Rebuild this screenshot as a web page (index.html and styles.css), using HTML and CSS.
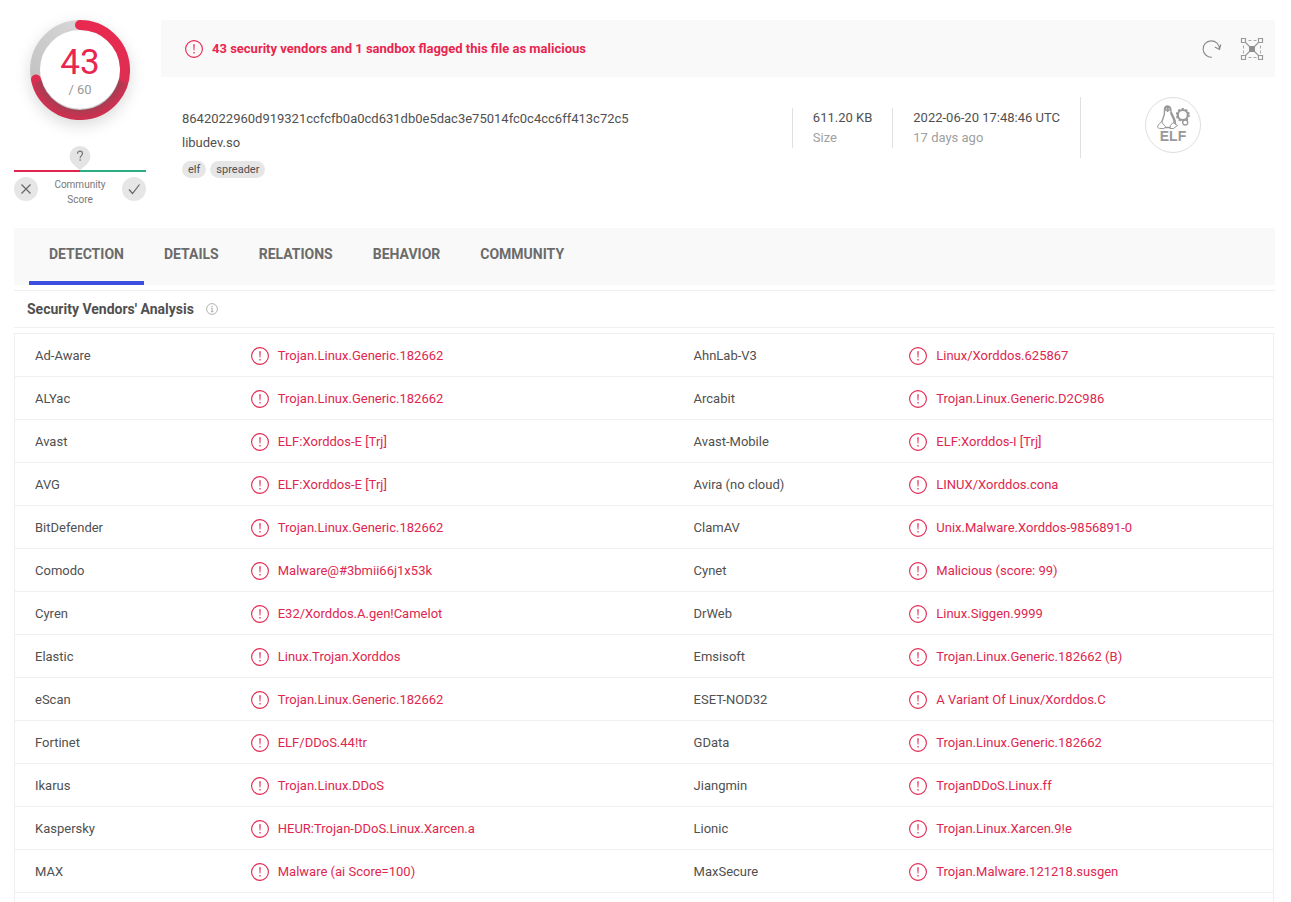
FILE: index.html
```
<!DOCTYPE html>
<html lang="en">
<head>
  <meta charset="UTF-8">
  <meta name="viewport" content="width=device-width, initial-scale=1.0">
  <title>libudev.so - File report</title>
  <link rel="stylesheet" href="styles.css">
</head>
<body>
  <svg class="sprite" aria-hidden="true">
    <symbol id="alert" viewBox="0 0 18 18">
      <circle cx="9" cy="9" r="8.4" fill="none" stroke="currentColor" stroke-width="1.1"/>
      <path d="M8.3 4.2h1.4l-.3 6.4h-.8zM8.4 12h1.2v1.4H8.4z" fill="currentColor"/>
    </symbol>
  </svg>

  <header class="report-header">
    <aside class="score">
      <div class="dial">
        <svg class="dial-ring" viewBox="0 0 100 100" aria-hidden="true">
          <defs>
            <linearGradient id="ringRed" x1="0" y1="0" x2="0" y2="1">
              <stop offset="0" stop-color="#e92a50"/>
              <stop offset="0.5" stop-color="#e02d52"/>
              <stop offset="1" stop-color="#cc3150"/>
            </linearGradient>
            <linearGradient id="ringGrey" x1="1" y1="0" x2="0" y2="1">
              <stop offset="0" stop-color="#dedede"/>
              <stop offset="1" stop-color="#bdbdbd"/>
            </linearGradient>
            <radialGradient id="ringShade" cx="50" cy="44" r="54" gradientUnits="userSpaceOnUse">
              <stop offset="0.8" stop-color="#555" stop-opacity="0.4"/>
              <stop offset="1" stop-color="#555" stop-opacity="0"/>
            </radialGradient>
          </defs>
          <circle cx="50" cy="50" r="45" fill="#fff" stroke="url(#ringGrey)" stroke-width="10"/>
          <path d="M50 5A45 45 0 1 1 6 59.4" fill="none" stroke="url(#ringRed)" stroke-width="10" stroke-linecap="round"/>
          <path d="M93 62A45 45 0 0 1 7 62" fill="none" stroke="url(#ringShade)" stroke-width="10"/>
        </svg>
        <div class="dial-text">
          <span class="positives">43</span>
          <span class="total">/ 60</span>
        </div>
      </div>
      <div class="community">
        <svg class="marker" viewBox="0 0 22 24" aria-hidden="true">
          <path d="M11 0a10.5 10.5 0 0 1 10.5 10.5c0 6-6 10-10.5 13.5C6.5 20.5.5 16.5.5 10.5A10.5 10.5 0 0 1 11 0z" fill="#e4e4e4"/>
          <path d="M8.5 7.800c0-1.700 1-2.700 2.500-2.700s2.500 1 2.500 2.500c0 2-2.400 2.200-2.400 4.600M11.100 13.300v1.400" fill="none" stroke="#777" stroke-width="1.2"/>
        </svg>
        <div class="community-bar"></div>
        <div class="votes">
          <button class="vote" type="button" aria-label="Vote malicious">
            <svg viewBox="0 0 24 24"><path d="M7.5 7.5l9 9M16.5 7.5l-9 9"/></svg>
          </button>
          <span class="community-label">Community Score</span>
          <button class="vote" type="button" aria-label="Vote harmless">
            <svg viewBox="0 0 24 24"><path d="M7 12.5l3.500 4L17.500 7.500"/></svg>
          </button>
        </div>
      </div>
    </aside>

    <section class="summary">
      <div class="banner">
        <svg class="icon"><use href="#alert"/></svg>
        <strong class="verdict">43 security vendors and 1 sandbox flagged this file as malicious</strong>
        <div class="tools">
          <button class="tool" type="button" aria-label="Reanalyze">
            <svg viewBox="0 0 24 24" fill="none" stroke="#8a8a8a" stroke-width="1.1">
              <path d="M12 20.200A8.200 8.200 0 1 1 19.500 12M14.800 10l4.700 2.500L20.800 7.500"/>
            </svg>
          </button>
          <button class="tool" type="button" aria-label="Open in graph">
            <svg viewBox="0 0 24 24" fill="none" stroke="#999">
              <path d="M3.500 3.500l17 17M20.500 3.500l-17 17" stroke-width="1.100"/>
              <path d="M8.500 3.500h3M13.500 3.500h3M8.500 20.500h3M13.500 20.500h3M3.500 8.500v3M3.500 13.500v3M20.500 8.500v3M20.500 13.500v3" stroke="#aaa"/>
              <path d="M1.500 1.500h4v4h-4zM18.500 1.500h4v4h-4zM1.500 18.500h4v4h-4zM18.500 18.500h4v4h-4z" fill="#fafafa" stroke-width="1.200"/>
              <path d="M9 9h6v6H9z" fill="#8f8f8f" stroke="none"/>
            </svg>
          </button>
        </div>
      </div>

      <div class="file">
        <div class="file-id">
          <div class="hash">8642022960d919321ccfcfb0a0cd631db0e5dac3e75014fc0c4cc6ff413c72c5</div>
          <div class="name">libudev.so</div>
          <div class="tags">
            <a class="tag" href="#elf">elf</a>
            <a class="tag" href="#spreader">spreader</a>
          </div>
        </div>
        <div class="facts">
          <div class="fact">
            <span>611.20 KB</span>
            <span class="muted">Size</span>
          </div>
          <div class="fact">
            <span>2022-06-20 17:48:46 UTC</span>
            <span class="muted">17 days ago</span>
          </div>
        </div>
        <div class="file-type">
          <svg viewBox="0 0 56 56" role="img" aria-label="ELF file">
            <circle cx="28" cy="28" r="27.500" fill="#fff" stroke="#ddd"/>
            <g fill="none" stroke="#999" stroke-width="1.400" stroke-linejoin="round">
              <!-- penguin -->
              <path d="M19.500 15c-.5-3.800.5-6 3-6s3.700 2 3.500 6c.3 3.500 4.500 7 4.500 11.500 0 2-1 3.500-2.500 4H17.500c-1-1-1.300-2.500-1-4 .5-4 3.300-7.500 3-11.500z"/>
              <path d="M26 15.500c1 3.500 3.800 6 3.700 10" stroke-width="2.400"/>
              <path d="M16.500 25l-2 1.500-1.800 2.500c-.3 1.500.3 2.200 1.800 2.400l4.500.3 1.500-2zM28 25.500l4.500 3-4 3h-3.500l.5-3z" fill="#fff" stroke-width="1"/>
              <!-- gears -->
              <circle cx="37.800" cy="18" r="5" stroke-width="2.200"/>
              <circle cx="37.800" cy="18" r="6.300" stroke-width="1.400" stroke-dasharray="2.200 1.760"/>
              <circle cx="40.200" cy="25.500" r="2.500" fill="#fff" stroke-width="1.300"/>
            </g>
            <path d="M19.400 14c-.4-3.500.8-5.300 3.100-5.300s3.600 1.800 3.500 5.300l-1.500-.5-2 1.700-1.700-1.700z" fill="#999"/>
            <path d="M21 12h1M23.500 12h1" stroke="#fff"/>
            <text class="type-text" x="28" y="44" text-anchor="middle">ELF</text>
          </svg>
        </div>
      </div>
    </section>
  </header>

  <nav class="tabs">
    <a class="tab active" href="#detection">DETECTION</a>
    <a class="tab" href="#details">DETAILS</a>
    <a class="tab" href="#relations">RELATIONS</a>
    <a class="tab" href="#behavior">BEHAVIOR</a>
    <a class="tab" href="#community">COMMUNITY</a>
  </nav>

  <main class="detection" id="detection">
    <div class="section-title">
      <h2>Security Vendors' Analysis</h2>
      <svg class="info" viewBox="0 0 12 12" fill="none" stroke="#aaa" aria-hidden="true">
        <circle cx="6" cy="6" r="5.4" stroke-width="0.9"/>
        <path d="M5 5.200h1.200v3.300M4.800 8.700h2.600M6 2.900v1.100"/>
      </svg>
    </div>

    <div class="vendors">
      <table>
        <colgroup>
          <col class="col-vendor"><col class="col-result-left"><col class="col-vendor"><col>
        </colgroup>
        <tbody>
          <tr>
            <td>Ad-Aware</td><td class="bad"><svg class="icon"><use href="#alert"/></svg>Trojan.Linux.Generic.182662</td>
            <td>AhnLab-V3</td><td class="bad"><svg class="icon"><use href="#alert"/></svg>Linux/Xorddos.625867</td>
          </tr>
          <tr>
            <td>ALYac</td><td class="bad"><svg class="icon"><use href="#alert"/></svg>Trojan.Linux.Generic.182662</td>
            <td>Arcabit</td><td class="bad"><svg class="icon"><use href="#alert"/></svg>Trojan.Linux.Generic.D2C986</td>
          </tr>
          <tr>
            <td>Avast</td><td class="bad"><svg class="icon"><use href="#alert"/></svg>ELF:Xorddos-E [Trj]</td>
            <td>Avast-Mobile</td><td class="bad"><svg class="icon"><use href="#alert"/></svg>ELF:Xorddos-I [Trj]</td>
          </tr>
          <tr>
            <td>AVG</td><td class="bad"><svg class="icon"><use href="#alert"/></svg>ELF:Xorddos-E [Trj]</td>
            <td>Avira (no cloud)</td><td class="bad"><svg class="icon"><use href="#alert"/></svg>LINUX/Xorddos.cona</td>
          </tr>
          <tr>
            <td>BitDefender</td><td class="bad"><svg class="icon"><use href="#alert"/></svg>Trojan.Linux.Generic.182662</td>
            <td>ClamAV</td><td class="bad"><svg class="icon"><use href="#alert"/></svg>Unix.Malware.Xorddos-9856891-0</td>
          </tr>
          <tr>
            <td>Comodo</td><td class="bad"><svg class="icon"><use href="#alert"/></svg>Malware@#3bmii66j1x53k</td>
            <td>Cynet</td><td class="bad"><svg class="icon"><use href="#alert"/></svg>Malicious (score: 99)</td>
          </tr>
          <tr>
            <td>Cyren</td><td class="bad"><svg class="icon"><use href="#alert"/></svg>E32/Xorddos.A.gen!Camelot</td>
            <td>DrWeb</td><td class="bad"><svg class="icon"><use href="#alert"/></svg>Linux.Siggen.9999</td>
          </tr>
          <tr>
            <td>Elastic</td><td class="bad"><svg class="icon"><use href="#alert"/></svg>Linux.Trojan.Xorddos</td>
            <td>Emsisoft</td><td class="bad"><svg class="icon"><use href="#alert"/></svg>Trojan.Linux.Generic.182662 (B)</td>
          </tr>
          <tr>
            <td>eScan</td><td class="bad"><svg class="icon"><use href="#alert"/></svg>Trojan.Linux.Generic.182662</td>
            <td>ESET-NOD32</td><td class="bad"><svg class="icon"><use href="#alert"/></svg>A Variant Of Linux/Xorddos.C</td>
          </tr>
          <tr>
            <td>Fortinet</td><td class="bad"><svg class="icon"><use href="#alert"/></svg>ELF/DDoS.44!tr</td>
            <td>GData</td><td class="bad"><svg class="icon"><use href="#alert"/></svg>Trojan.Linux.Generic.182662</td>
          </tr>
          <tr>
            <td>Ikarus</td><td class="bad"><svg class="icon"><use href="#alert"/></svg>Trojan.Linux.DDoS</td>
            <td>Jiangmin</td><td class="bad"><svg class="icon"><use href="#alert"/></svg>TrojanDDoS.Linux.ff</td>
          </tr>
          <tr>
            <td>Kaspersky</td><td class="bad"><svg class="icon"><use href="#alert"/></svg>HEUR:Trojan-DDoS.Linux.Xarcen.a</td>
            <td>Lionic</td><td class="bad"><svg class="icon"><use href="#alert"/></svg>Trojan.Linux.Xarcen.9!e</td>
          </tr>
          <tr>
            <td>MAX</td><td class="bad"><svg class="icon"><use href="#alert"/></svg>Malware (ai Score=100)</td>
            <td>MaxSecure</td><td class="bad"><svg class="icon"><use href="#alert"/></svg>Trojan.Malware.121218.susgen</td>
          </tr>
        </tbody>
      </table>
    </div>
  </main>
</body>
</html>
```

FILE: styles.css
```
* {
  margin: 0;
  padding: 0;
  box-sizing: border-box;
}

body {
  display: flex;
  flex-direction: column;
  min-height: 100vh;
  padding: 20px 16px 0 14px;
  background: #fff;
  color: #505050;
  font-family: Roboto, "Liberation Sans", sans-serif;
  font-size: 13px;
  line-height: 20px;
}

button {
  border: none;
  background: none;
  cursor: pointer;
}

a {
  color: inherit;
  text-decoration: none;
}

.sprite {
  display: none;
}

.icon {
  flex: none;
  width: 18px;
  height: 18px;
}

/* Header */
.report-header {
  display: flex;
  gap: 15px;
  min-height: 208px;
}

.score {
  flex: none;
  width: 132px;
}

.dial {
  display: grid;
  width: 100px;
  height: 100px;
  margin: 0 auto;
  border-radius: 50%;
  box-shadow: 0 5px 16px rgba(0, 0, 0, 0.15);
}

.dial-ring,
.dial-text {
  grid-area: 1 / 1;
}

.dial-text {
  display: flex;
  flex-direction: column;
  align-items: center;
  padding-top: 26px;
}

.positives {
  color: #e8264f;
  font-size: 35px;
  line-height: 34px;
}

.total {
  color: #999;
  font-size: 13px;
}

.community {
  display: flex;
  flex-direction: column;
  margin-top: 26px;
}

.marker {
  align-self: center;
  width: 22px;
  height: 24px;
}

.community-bar {
  height: 2px;
  background: linear-gradient(to right, #e0264c 50%, #2bae82 50%);
}

.votes {
  display: flex;
  justify-content: space-between;
  align-items: flex-start;
  padding-top: 5px;
}

.vote {
  width: 24px;
  height: 24px;
  border-radius: 50%;
  background: #e6e6e6;
}

.vote svg {
  display: block;
  fill: none;
  stroke: #666;
  stroke-width: 1.2;
}

.community-label {
  width: 60px;
  color: #777;
  font-size: 10px;
  line-height: 15px;
  text-align: center;
}

.summary {
  flex: 1;
}

.banner {
  display: flex;
  align-items: center;
  gap: 9px;
  height: 57px;
  padding: 0 11px 0 24px;
  background: #f9f9f9;
  color: #e8264f;
}

.verdict {
  padding-top: 1px;
  font-weight: 700;
}

.tools {
  display: flex;
  gap: 16px;
  margin-left: auto;
}

.tool {
  width: 24px;
  height: 24px;
}

.tool svg {
  display: block;
}

.file {
  display: flex;
  align-items: flex-start;
  padding: 20px 10px 0 21px;
}

.file-id {
  flex: 1;
  padding-top: 10px;
}

.hash,
.name {
  line-height: 24px;
}

.tags {
  display: flex;
  gap: 4px;
  margin-top: 6px;
}

.tag {
  padding: 0 6px;
  border-radius: 9px;
  background: #e6e6e6;
  font-size: 11px;
  line-height: 17px;
}

.facts {
  display: flex;
  align-items: center;
  height: 61px;
  border-right: 1px solid #e0e0e0;
}

.fact {
  display: flex;
  flex-direction: column;
  padding: 0 20px;
  border-left: 1px solid #e0e0e0;
}

.muted {
  color: #a0a0a0;
}

.file-type {
  width: 184px;
  text-align: center;
}

.file-type svg {
  width: 56px;
  height: 56px;
}

.type-text {
  fill: #999;
  font-family: "Liberation Sans", sans-serif;
  font-size: 14px;
  font-weight: 700;
}

/* Tabs */
.tabs {
  display: flex;
  height: 57px;
  padding: 0 15px;
  background: #f9f9f9;
}

.tab {
  padding: 16px 20px 0;
  border-bottom: 4px solid transparent;
  color: #6b6b6b;
  font-size: 14px;
  font-weight: 700;
}

.tab.active {
  border-bottom-color: #3c4fe0;
}

/* Vendor results */
.detection {
  display: flex;
  flex: 1;
  flex-direction: column;
  margin-top: 5px;
}

.section-title {
  display: flex;
  align-items: center;
  gap: 12px;
  height: 38px;
  padding-left: 13px;
  border-top: 1px solid #eee;
  border-bottom: 1px solid #f1f1f1;
}

h2 {
  font-size: 14px;
  font-weight: 700;
}

.info {
  width: 12px;
  height: 12px;
}

.vendors {
  flex: 1;
  margin: 5px 1px 0 0;
  border: 1px solid #efefef;
  border-bottom: none;
}

table {
  width: 100%;
  border-spacing: 0;
  table-layout: fixed;
}

.col-vendor {
  width: 17.15%;
}

.col-result-left {
  width: 35.2%;
}

td {
  height: 43px;
  padding: 1px 20px 0;
  border-bottom: 1px solid #efefef;
}

.bad {
  color: #e0264f;
}

.bad .icon {
  margin-right: 9px;
  vertical-align: -5px;
}
```
